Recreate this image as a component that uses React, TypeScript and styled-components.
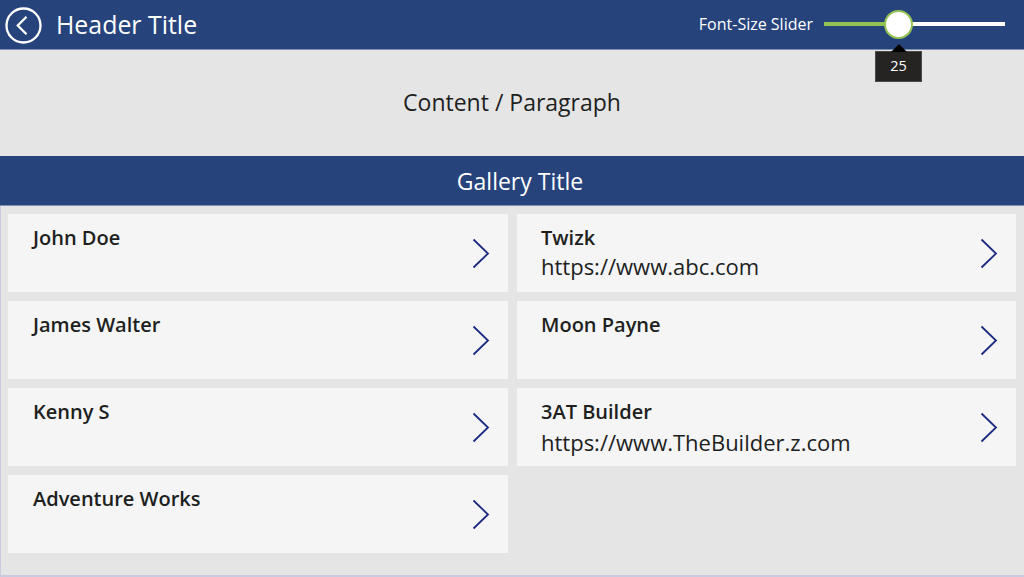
import React from "react";
import styled, { createGlobalStyle } from "styled-components";

const Global = createGlobalStyle`
  html, body { margin: 0; padding: 0; background: #e5e5e5; }
  body { font-family: "Open Sans", "Liberation Sans", sans-serif; }
`;

const Screen = styled.div`
  width: 1024px;
  height: 577px;
  box-sizing: border-box;
  background: #e5e5e5;
  display: flex;
  flex-direction: column;
  overflow: hidden;
  border-bottom: 2px solid #c9cce0;
`;

const Header = styled.header`
  height: 50px;
  flex: none;
  box-sizing: border-box;
  background: #26437c;
  border-bottom: 1px solid #7f8fb2;
  display: flex;
  align-items: center;
  padding: 0 19px 1px 5px;
  color: #fff;
`;

const BackButton = styled.svg`
  width: 37px;
  height: 37px;
  flex: none;
  margin: 2px 14px 0 0;
`;

const HeaderTitle = styled.h1`
  margin: 0;
  font-size: 24.9px;
  font-weight: 400;
  flex: 1;
`;

const SliderLabel = styled.span`
  font-size: 16px;
  margin-right: 11px;
`;

const Slider = styled.div`
  width: 181px;
  height: 4px;
  background: linear-gradient(to right, #92c353 0 40%, #fff 40% 100%);
  position: relative;
`;

const Thumb = styled.div`
  position: absolute;
  left: 60px;
  top: -12.5px;
  width: 29px;
  height: 29px;
  box-sizing: border-box;
  border-radius: 50%;
  background: #fff;
  border: 2.5px solid #92c353;
`;

const Tooltip = styled.div`
  position: absolute;
  left: 51px;
  top: 29px;
  width: 47px;
  height: 31px;
  padding-bottom: 2px;
  background: #252423;
  color: #fff;
  font-size: 14.5px;
  display: flex;
  align-items: center;
  justify-content: center;
  border: 1px solid #4a4a4a;
  box-sizing: border-box;
  &::before {
    content: "";
    position: absolute;
    left: 50%;
    top: -8px;
    margin-left: -8px;
    border-left: 8px solid transparent;
    border-right: 8px solid transparent;
    border-bottom: 8px solid #000;
  }
`;

const Paragraph = styled.div`
  height: 106px;
  flex: none;
  display: flex;
  align-items: center;
  justify-content: center;
  font-size: 23px;
  color: #201f1e;
  padding-bottom: 3px;
  box-sizing: border-box;
`;

const GalleryTitle = styled.h2`
  margin: 0;
  height: 50px;
  flex: none;
  box-sizing: border-box;
  background: #26437c;
  border-bottom: 1px solid #7f8fb2;
  color: #fff;
  font-size: 23px;
  font-weight: 400;
  display: flex;
  align-items: center;
  justify-content: center;
  padding-left: 16px;
`;

const Gallery = styled.div`
  display: grid;
  grid-template-columns: 500px 499px;
  grid-auto-rows: 78px;
  gap: 9px;
  padding: 8px 0 0 7px;
  border-left: 1px solid #c9cce0;
  flex: 1;
`;

const Card = styled.div`
  background: #f5f5f5;
  display: flex;
  align-items: flex-start;
  justify-content: space-between;
  padding: 10px 18px 0 24px;
  box-sizing: border-box;
  &:nth-child(odd) {
    padding-left: 25px;
  }
`;

const CardText = styled.div`
  display: flex;
  flex-direction: column;
  color: #201f1e;
`;

const Name = styled.div`
  font-size: 20px;
  font-weight: 600;
  line-height: 28px;
`;

const Url = styled.div<{ $gap: number }>`
  font-size: 22px;
  line-height: 30px;
  margin-top: ${(p) => p.$gap}px;
`;

const Chevron = styled.svg`
  width: 18px;
  height: 32px;
  flex: none;
  margin-top: 14px;
`;

const people: { name: string; url?: string; gap?: number }[] = [
  { name: "John Doe" },
  { name: "Twizk", url: "https://www.abc.com", gap: -1 },
  { name: "James Walter" },
  { name: "Moon Payne" },
  { name: "Kenny S" },
  { name: "3AT Builder", url: "https://www.TheBuilder.z.com", gap: 1 },
  { name: "Adventure Works" },
];

export default function App() {
  return (
    <Screen>
      <Global />
      <Header>
        <BackButton viewBox="0 0 37 37" fill="none" stroke="#fff">
          <circle cx="18.5" cy="18.5" r="17" strokeWidth="2.3" />
          <path d="M21.5 9.8 L12.8 18.5 L21.5 27.2" strokeWidth="2.3" />
        </BackButton>
        <HeaderTitle>Header Title</HeaderTitle>
        <SliderLabel>Font-Size Slider</SliderLabel>
        <Slider>
          <Thumb />
          <Tooltip>25</Tooltip>
        </Slider>
      </Header>
      <Paragraph>Content / Paragraph</Paragraph>
      <GalleryTitle>Gallery Title</GalleryTitle>
      <Gallery>
        {people.map((p) => (
          <Card key={p.name}>
            <CardText>
              <Name>{p.name}</Name>
              {p.url && <Url $gap={p.gap ?? 0}>{p.url}</Url>}
            </CardText>
            <Chevron viewBox="0 0 18 32" fill="none" stroke="#1c2a80" strokeWidth="1.8">
              <path d="M1.5 1.5 L16 15.5 L1.5 29.5" />
            </Chevron>
          </Card>
        ))}
      </Gallery>
    </Screen>
  );
}
